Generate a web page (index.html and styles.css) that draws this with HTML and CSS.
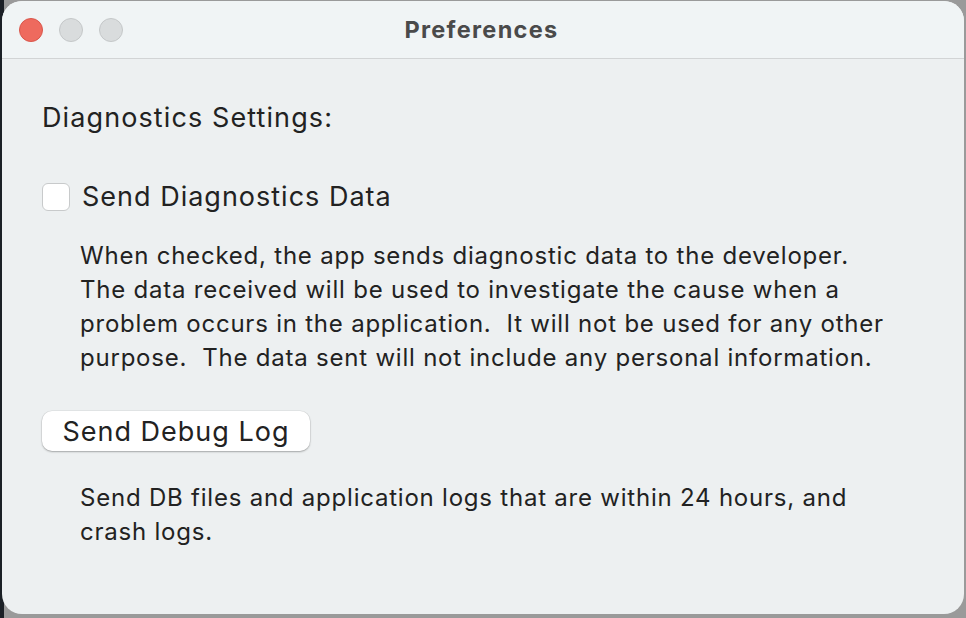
FILE: index.html
```html
<!DOCTYPE html>
<html>
<head>
<meta charset="utf-8">
<link rel="stylesheet" href="styles.css">
</head>
<body>
<div class="window">
  <div class="titlebar">
    <div class="lights">
      <span class="light close"></span>
      <span class="light"></span>
      <span class="light"></span>
    </div>
    <div class="title">Preferences</div>
  </div>
  <div class="content">
    <div class="heading">Diagnostics Settings:</div>
    <label class="check-row">
      <span class="checkbox"></span>
      <span class="check-label">Send Diagnostics Data</span>
    </label>
    <p class="desc">When checked, the app sends diagnostic data to the developer.<br>The data received will be used to investigate the cause when a<br>problem occurs in the application.&nbsp; It will not be used for any other<br>purpose.&nbsp; The data sent will not include any personal information.</p>
    <button class="btn">Send Debug Log</button>
    <p class="desc desc2">Send DB files and application logs that are within 24 hours, and<br>crash logs.</p>
  </div>
</div>
</body>
</html>
```
FILE: styles.css
```css
html, body {
  margin: 0;
  padding: 0;
  width: 966px;
  height: 618px;
  overflow: hidden;
}
body {
  background: linear-gradient(to right, #1b2026 0, #1b2026 4px, #9a9a9a 4px);
  font-family: Inter, "Noto Sans", sans-serif;
  padding: 1px 2px 4px 2px;
  box-sizing: border-box;
}
.window {
  height: 613px;
  border-radius: 20px;
  background: #edf0f1;
  overflow: hidden;
  display: flex;
  flex-direction: column;
}
.titlebar {
  height: 57px;
  flex: none;
  background: #f0f4f5;
  border-bottom: 1px solid #d2d4d5;
  position: relative;
  display: flex;
  align-items: center;
  justify-content: center;
}
.lights {
  position: absolute;
  left: 17px;
  top: 17px;
  display: flex;
  gap: 16px;
}
.light {
  width: 22px;
  height: 22px;
  border-radius: 50%;
  background: #d9dcdd;
  border: 1px solid #c4c7c8;
}
.light.close {
  background: #ee6a5e;
  border-color: #d9564b;
}
.title {
  font-weight: 700;
  font-size: 23.5px;
  letter-spacing: 1.3px;
  color: #4a4a4a;
  margin-left: -3px;
  margin-top: 0px;
}
.content {
  padding: 42px 0 0 40px;
  color: #222;
}
.heading {
  font-size: 27px;
  letter-spacing: 1.1px;
  line-height: 34px;
}
.check-row {
  display: flex;
  align-items: center;
  gap: 12px;
  margin-top: 45px;
  margin-left: 0;
}
.checkbox {
  width: 26px;
  height: 26px;
  border-radius: 6px;
  background: #fff;
  border: 1px solid #c8cacb;
}
.check-label {
  font-size: 27px;
  letter-spacing: 1px;
  line-height: 34px;
}
.desc {
  margin: 25px 0 0 38px;
  font-size: 24px;
  letter-spacing: 0.78px;
  line-height: 34.1px;
}
.btn {
  display: block;
  margin: 36px 0 0 0;
  width: 268px;
  height: 40px;
  border: none;
  border-radius: 10px;
  background: #fff;
  box-shadow: 0 1px 2px rgba(0,0,0,0.28), 0 0 0 0.5px rgba(0,0,0,0.08);
  font-family: Inter, "Noto Sans", sans-serif;
  font-size: 27px;
  letter-spacing: 1px;
  color: #222;
  padding: 0;
}
.desc2 {
  margin-top: 30px;
}
```
